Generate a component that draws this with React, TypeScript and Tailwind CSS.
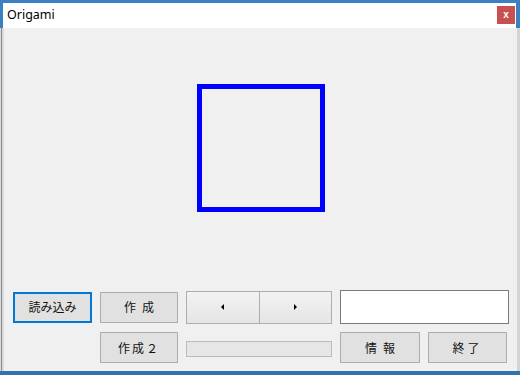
import type { ReactNode } from "react";

const JP = "font-['Noto_Sans_CJK_JP','Noto_Sans',sans-serif]";

function Btn({ children, focused }: { children: ReactNode; focused?: boolean }) {
  return (
    <button
      className={`h-[31px] w-full bg-[#e1e1e1] text-[12px] leading-none text-[#111] ${JP} ${
        focused ? "border-2 border-[#0078d7]" : "border border-[#adadad]"
      }`}
    >
      {children}
    </button>
  );
}

function Arrow({ dir }: { dir: "l" | "r" }) {
  return (
    <svg width="4" height="6" viewBox="0 0 4 6" className="block">
      {dir === "l" ? <path d="M3 0 L0 3 L3 6 Z" fill="#000" /> : <path d="M1 0 L4 3 L1 6 Z" fill="#000" />}
    </svg>
  );
}

export default function App() {
  return (
    <div className="w-[520px] h-[375px] flex flex-col bg-[#3b80c0] overflow-hidden">
      {/* title bar */}
      <div className="h-[28px] pt-[3px] pl-[3px] pr-[4px] flex">
        <div className="flex-1 bg-white flex items-center pl-[4px] pr-[1px]">
          <span className="flex-1 text-[12.5px] text-black font-['Noto_Sans',sans-serif] leading-none">Origami</span>
          <div className="w-[18px] h-[18px] bg-[#c75050] flex items-center justify-center text-white text-[10px] font-bold leading-none font-['Liberation_Sans',sans-serif] -mt-[2px]">
            x
          </div>
        </div>
      </div>

      {/* client row */}
      <div className="h-[343px] flex">
        <div className="w-[4px] bg-[#dadada] flex">
          <div className="w-[1px] bg-[#8a8a8a] ml-[1px]" />
        </div>
        <div className="flex-1 bg-[#f0f0f0] flex flex-col">
          <div className="mt-[56px] ml-[193px] w-[128px] h-[128px] border-[5px] border-[#0000ff]" />

          <div className="mt-[78px] pl-[9px] grid grid-cols-[79px_78px_146px_169px] grid-rows-[34px_31px] gap-x-2 gap-y-2">
            <div className="flex items-center">
              <Btn focused>読み込み</Btn>
            </div>
            <div className="flex items-center">
              <Btn>作{"\u2002"}成</Btn>
            </div>
            <div className="flex items-center">
              <div className="h-[33px] w-full flex border border-[#adadad] bg-gradient-to-b from-[#f2f2f2] to-[#e5e5e5]">
                <div className="flex-1 flex items-center justify-center border-r border-[#adadad]">
                  <Arrow dir="l" />
                </div>
                <div className="flex-1 flex items-center justify-center">
                  <Arrow dir="r" />
                </div>
              </div>
            </div>
            <div className="h-[34px] bg-white border border-[#7a7a7a]" />

            <div className="col-start-2 flex items-center">
              <Btn>
                <span className="tracking-[2px]">作成２</span>
              </Btn>
            </div>
            <div className="flex items-center pt-[2px]">
              <div className="h-[16px] w-full bg-[#e6e6e6] border border-[#bcbcbc]" />
            </div>
            <div className="flex gap-2 items-center">
              <div className="w-[80px]">
                <Btn>情{"\u2002"}報</Btn>
              </div>
              <div className="w-[79px]">
                <Btn>
                  <span className="tracking-[3px]">終了</span>
                </Btn>
              </div>
            </div>
          </div>
        </div>
        <div className="w-[3px] bg-[#d4d4d4]" />
      </div>

      {/* taskbar behind */}
      <div className="flex-1 bg-[#3372b0]" />
    </div>
  );
}
